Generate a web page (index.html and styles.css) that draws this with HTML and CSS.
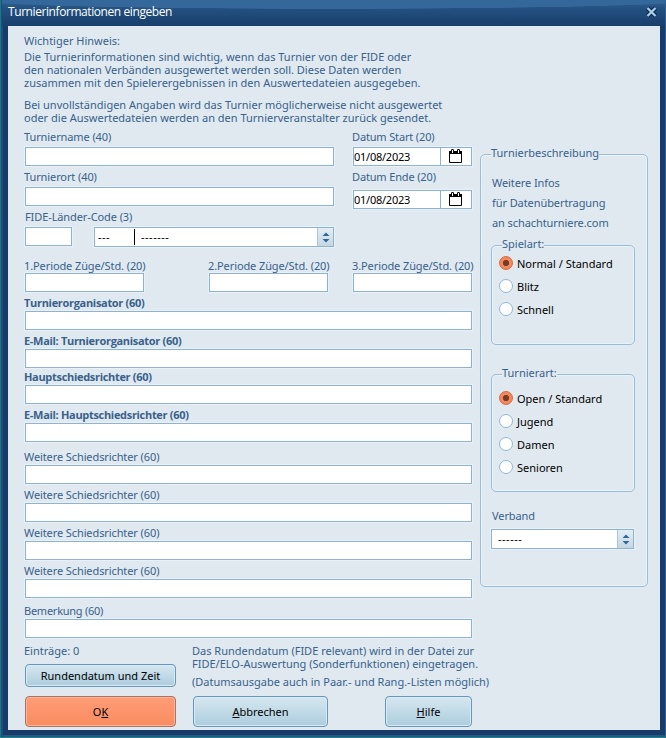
FILE: index.html
```html
<!DOCTYPE html>
<html lang="de">
<head>
<meta charset="utf-8">
<title>Turnierinformationen eingeben</title>
<link rel="stylesheet" href="styles.css">
</head>
<body>
<div class="window">
  <header class="titlebar">
    <h1>Turnierinformationen eingeben</h1>
    <svg class="close" width="14" height="14" viewBox="0 0 14 14"><path d="M2.500 3l8 8M10.500 3l-8 8" stroke="#0f2c52" stroke-width="4.6"/><path d="M2.500 3l8 8M10.500 3l-8 8" stroke="#a9cfea" stroke-width="2.300"/></svg>
  </header>
  <main class="content">
    <section class="notice">
      <p class="lead">Wichtiger Hinweis:</p>
      <p>Die Turnierinformationen sind wichtig, wenn das Turnier von der FIDE oder<br>den nationalen Verbänden ausgewertet werden soll. Diese Daten werden<br>zusammen mit den Spielerergebnissen in den Auswertedateien ausgegeben.</p>
      <p class="second">Bei unvollständigen Angaben wird das Turnier möglicherweise nicht ausgewertet<br>oder die Auswertedateien werden an den Turnierveranstalter zurück gesendet.</p>
    </section>
    <div class="columns">
      <div class="form">
        <div class="top">
          <div class="place">
            <div class="field tall"><span class="label">Turniername (40)</span><div class="input"></div></div>
            <div class="field tall"><span class="label">Turnierort (40)</span><div class="input"></div></div>
            <div class="field tall"><span class="label code">FIDE-Länder-Code (3)</span>
              <div class="country">
                <div class="input short"></div>
                <div class="combo"><span class="abbr">---</span><span class="name">-------</span><span class="spin"><svg width="8" height="11" viewBox="0 0 8 11"><path d="M.5 4L4 .5 7.500 4zM.5 7L4 10.500 7.500 7z" fill="#31689c"/></svg></span></div>
              </div>
            </div>
          </div>
          <div class="dates">
            <div class="field tall"><span class="label">Datum Start (20)</span><div class="input date"><span>01/08/2023</span><i><svg width="14" height="16" viewBox="0 0 14 16"><path d="M0 3h13v3H0z"/><path d="M.5 4v10.500h12V4" fill="none" stroke="#000"/><path d="M2 5V2q0-1 1.500-1T5 2v3zM8 5V2q0-1 1.500-1T11 2v3z"/><path d="M3 2h1v3H3zM9 2h1v3H9z" fill="#fff"/></svg></i></div></div>
            <div class="field tall end"><span class="label">Datum Ende (20)</span><div class="input date"><span>01/08/2023</span><i><svg width="14" height="16" viewBox="0 0 14 16"><path d="M0 3h13v3H0z"/><path d="M.5 4v10.500h12V4" fill="none" stroke="#000"/><path d="M2 5V2q0-1 1.500-1T5 2v3zM8 5V2q0-1 1.500-1T11 2v3z"/><path d="M3 2h1v3H3zM9 2h1v3H9z" fill="#fff"/></svg></i></div></div>
          </div>
        </div>
        <div class="periods">
          <div class="field"><span class="label">1.Periode Züge/Std. (20)</span><div class="input"></div></div>
          <div class="field"><span class="label">2.Periode Züge/Std. (20)</span><div class="input"></div></div>
          <div class="field"><span class="label">3.Periode Züge/Std. (20)</span><div class="input"></div></div>
        </div>
        <div class="field strong"><span class="label">Turnierorganisator (60)</span><div class="input"></div></div>
        <div class="field strong"><span class="label">E-Mail: Turnierorganisator (60)</span><div class="input"></div></div>
        <div class="field strong close-up"><span class="label">Hauptschiedsrichter (60)</span><div class="input"></div></div>
        <div class="field strong"><span class="label">E-Mail: Hauptschiedsrichter (60)</span><div class="input"></div></div>
        <div class="field apart"><span class="label">Weitere Schiedsrichter (60)</span><div class="input"></div></div>
        <div class="field"><span class="label">Weitere Schiedsrichter (60)</span><div class="input"></div></div>
        <div class="field"><span class="label">Weitere Schiedsrichter (60)</span><div class="input"></div></div>
        <div class="field"><span class="label">Weitere Schiedsrichter (60)</span><div class="input"></div></div>
        <div class="field remark"><span class="label">Bemerkung (60)</span><div class="input"></div></div>
      </div>
      <aside class="group description">
        <span class="legend">Turnierbeschreibung</span>
        <p class="info">Weitere Infos<br>für Datenübertragung<br>an schachturniere.com</p>
        <div class="group play">
          <span class="legend">Spielart:</span>
          <div class="radio on"><b></b><span>Normal / Standard</span></div>
          <div class="radio"><b></b><span>Blitz</span></div>
          <div class="radio"><b></b><span>Schnell</span></div>
        </div>
        <div class="group kind">
          <span class="legend">Turnierart:</span>
          <div class="radio on"><b></b><span>Open / Standard</span></div>
          <div class="radio"><b></b><span>Jugend</span></div>
          <div class="radio"><b></b><span>Damen</span></div>
          <div class="radio"><b></b><span>Senioren</span></div>
        </div>
        <span class="label union">Verband</span>
        <div class="combo"><span class="name">------</span><span class="spin"><svg width="8" height="11" viewBox="0 0 8 11"><path d="M.5 4L4 .5 7.500 4zM.5 7L4 10.500 7.500 7z" fill="#31689c"/></svg></span></div>
      </aside>
    </div>
    <footer class="footer">
      <div class="entries"><span>Einträge: 0</span><button>Rundendatum und Zeit</button></div>
      <div class="note"><p>Das Rundendatum (FIDE relevant) wird in der Datei zur<br>FIDE/ELO-Auswertung (Sonderfunktionen) eingetragen.</p><p class="hint">(Datumsausgabe auch in Paar.- und Rang.-Listen möglich)</p></div>
    </footer>
    <div class="actions">
      <button class="ok"><span>O<u>K</u></span></button>
      <button class="cancel"><span><u>A</u>bbrechen</span></button>
      <button class="help"><span><u>H</u>ilfe</span></button>
    </div>
  </main>
</div>
</body>
</html>
```

FILE: styles.css
```css
* { box-sizing: border-box; }
body { margin: 0; font: 11px/13px "Noto Sans", sans-serif; color: #38618c; }
p, h1 { margin: 0; }
p, span { white-space: nowrap; }
.window {
  width: 666px; height: 738px; padding: 0 5px 7px 7px;
  background: #193b69;
  border-style: solid; border-width: 0 1px 1px 1px; border-color: #2b6293 #2b6293 #178282 #0b7f84;
  box-shadow: inset 2px 0 #234b7c, inset 0 -2px #285687;
}
.titlebar {
  height: 26px; margin: 0 -5px 0 -6px; padding: 0 6px;
  display: flex; justify-content: space-between;
  background:
    radial-gradient(ellipse 370px 9px at 50% 0, #35689a 95%, transparent 100%),
    linear-gradient(#3b719e 0, #2b5a8b 3px, #235080 9px, #193f6d 25px);
}
.titlebar h1 { color: #fff; font: 400 12px/24px "Open Sans", sans-serif; letter-spacing: -0.42px; }
.close { margin-top: 5px; }
.content { height: 704px; background: #e0e9f0; padding: 8px 12px 0 16px; }
.notice { height: 93px; }
.lead { line-height: 14px; margin-bottom: 2px; }
.second { margin-top: 9px; }
.columns { display: flex; gap: 8px; height: 511px; }
.form { width: 448px; }
.label { display: block; line-height: 16px; height: 16px; letter-spacing: -0.1px; }
.input { height: 19px; margin-left: 1px; background: #fff; border: 1px solid #8fb3cd; box-shadow: 0 0 0 1px #e8f1f7; }
.field { margin-top: 3px; }
.tall { margin: 0 0 1px; }
.tall .label { height: 20px; line-height: 20px; }
.code { padding-left: 1px; }
.top { display: flex; justify-content: space-between; height: 120px; }
.place { width: 310px; }
.dates { width: 120px; }
.dates .label { letter-spacing: -0.15px; }
.dates .end .label { height: 23px; }
.country { display: flex; justify-content: space-between; }
.short { width: 47px; }
.combo { display: flex; width: 240px; height: 20px; background: #fff; border: 1px solid #8fb3cd; box-shadow: 0 0 0 1px #e8f1f7; color: #000; line-height: 18px; letter-spacing: 0.5px; }
.abbr { width: 40px; height: 16px; margin-top: 1px; padding-left: 3px; border-right: 1px solid #000; line-height: 16px; }
.name { padding-left: 6px; flex: 1; }
.spin { width: 16px; border-left: 1px solid #a9c5d9; background: linear-gradient(#e4edf4, #c5d7e4); display: flex; align-items: center; justify-content: center; }
.date { display: flex; color: #000; line-height: 18px; }
.date span { width: 86px; letter-spacing: -0.25px; }
.date i { flex: 1; border-left: 1px solid #8fb3cd; padding-left: 8px; }
.date svg { display: block; }
.periods { display: grid; grid-template-columns: 184px 144px 120px; height: 33px; margin-top: 12px; }
.periods .field { width: 120px; margin: 0; }
.periods .label { height: 14px; line-height: 14px; }
.strong { font: 700 11px/13px "Open Sans", sans-serif; }
.strong .label { letter-spacing: -0.31px; }
.close-up { margin-top: 1px; }
.apart { margin-top: 7px; }
.remark { margin-top: 5px; }
.remark .label { letter-spacing: -0.25px; }
.group { border: 1px solid #9bbdd8; border-radius: 5px; box-shadow: inset 0 0 0 1px #e9f2f8; }
.legend { display: block; width: max-content; line-height: 14px; margin: -9px 0 0 10px; background: #e0e9f0; }
.description { width: 168px; height: 433px; margin-top: 27px; padding: 0 10px; }
.description > .legend { margin-left: 0; }
.info { line-height: 20px; margin-top: 13px; padding-left: 1px; letter-spacing: -0.08px; }
.play { width: 144px; height: 100px; margin-top: 12px; }
.play .legend { margin-bottom: 5px; }
.kind { height: 118px; width: 144px; margin-top: 29px; }
.kind .legend { margin-bottom: 11px; }
.radio { display: flex; gap: 4px; height: 23px; padding-left: 7px; color: #000; line-height: 16px; }
.radio b { width: 14px; height: 14px; border: 1px solid #91b8d5; border-radius: 50%; background: #fff; }
.radio.on b { border-color: #d66a40; background: radial-gradient(circle, #783c24 0 2.8px, #f3885f 3.4px); }
.union { margin-top: 16px; padding-left: 1px; }
.description .combo { width: 143px; margin-top: 5px; }
.footer { display: flex; height: 58px; padding-top: 6px; }
.entries { width: 168px; }
.entries span { display: block; line-height: 13px; }
button { font: inherit; color: #000; padding: 0; border: 1px solid #6798ba; border-radius: 4px; background: linear-gradient(#d6e7f0, #bfd9e6 55%, #acccde); box-shadow: inset 0 0 0 1px #d8eaf3; }
.entries button { display: block; width: 151px; height: 23px; margin: 7px 0 0 1px; }
.hint { margin-top: 5px; }
.actions { display: flex; padding-left: 1px; }
.actions button { height: 31px; }
.actions .ok { width: 151px; border-color: #a57568; background: linear-gradient(#ff9c78, #f98c60); box-shadow: inset 0 0 0 1px #ffb294; }
.cancel { width: 135px; margin-left: 17px; }
.help { width: 87px; margin-left: 57px; }
```
